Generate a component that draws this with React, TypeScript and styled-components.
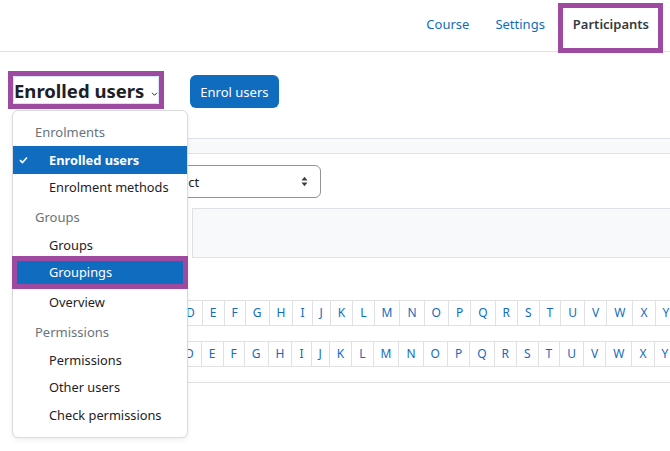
import React from 'react';
import styled, { createGlobalStyle } from 'styled-components';

const GlobalStyle = createGlobalStyle`
  html, body {
    margin: 0;
    padding: 0;
    background: #ffffff;
  }
  body {
    font-family: "Noto Sans", "Open Sans", sans-serif;
    font-size: 13px;
    color: #1d2125;
  }
  * {
    box-sizing: border-box;
  }
`;

const MARK = '#9f4aa1';
const PRIMARY = '#0f6cbf';
const LINE = '#dee2e6';

const Page = styled.div`
  width: 670px;
  height: 451px;
  overflow: hidden;
  position: relative;
  background: #ffffff;
`;

const TopNav = styled.nav`
  height: 52px;
  display: flex;
  justify-content: flex-end;
  align-items: flex-start;
  padding-right: 7px;
  border-bottom: 1px solid ${LINE};
`;

const NavLink = styled.a<{ $marked?: boolean }>`
  display: block;
  font-size: 13px;
  line-height: 20px;
  text-decoration: none;
  white-space: nowrap;
  color: ${p => (p.$marked ? '#343a40' : PRIMARY)};
  font-weight: ${p => (p.$marked ? 600 : 400)};
  padding: ${p => (p.$marked ? '6px 9px 0 10px' : '14px 13px')};
  ${p =>
    p.$marked
      ? `
    position: relative;
    z-index: 1;
    margin-top: 3px;
    height: 50px;
    border: 5px solid ${MARK};
    background: #ffffff;
  `
      : ''}
`;

const Main = styled.main`
  padding-left: 8px;
`;

const HeaderRow = styled.div`
  display: flex;
  align-items: center;
  margin-top: 19px;
  height: 38px;
`;

const SelectWrap = styled.div`
  position: relative;
`;

const MarkedFrame = styled.div`
  border: 5px solid ${MARK};
  height: 38px;
`;

const HeadingSelect = styled.div`
  display: flex;
  align-items: center;
  height: 28px;
  padding: 2px 0 0 0;
  border: 1px solid rgba(15, 108, 191, 0.18);
  border-radius: 2px;
  font-size: 18.5px;
  font-weight: 700;
  line-height: 26px;
  color: #1d2125;
  white-space: nowrap;
`;

const Chevron = styled.svg`
  margin-left: 7px;
  margin-top: 5px;
  flex: none;
`;

const PrimaryButton = styled.button`
  margin-left: 26px;
  margin-top: 3px;
  height: 33px;
  padding: 0 10px;
  border: none;
  border-radius: 6px;
  background: ${PRIMARY};
  color: #ffffff;
  font-family: inherit;
  font-size: 13px;
  white-space: nowrap;
`;

const Menu = styled.div`
  position: absolute;
  top: 39px;
  left: 4px;
  width: 176px;
  padding: 7px 0 8px;
  background: #ffffff;
  border: 1px solid #d7dade;
  border-radius: 6px;
  box-shadow: 0 2px 5px rgba(0, 0, 0, 0.07);
  z-index: 10;
`;

const MenuHeader = styled.div<{ $first?: boolean }>`
  height: 28px;
  margin-top: ${p => (p.$first ? 0 : 2)}px;
  padding-left: 22px;
  display: flex;
  align-items: center;
  color: #6a737b;
  font-size: 13px;
`;

const MenuItem = styled.div<{ $active?: boolean; $marked?: boolean }>`
  display: flex;
  align-items: center;
  height: ${p => (p.$marked ? 33 : 27.5)}px;
  padding-left: ${p => (p.$marked ? 2 : 6)}px;
  font-size: 12.8px;
  white-space: nowrap;
  color: ${p => (p.$active || p.$marked ? '#ffffff' : '#1d2125')};
  font-weight: ${p => (p.$active ? 700 : 400)};
  background: ${p => (p.$active || p.$marked ? PRIMARY : 'transparent')};
  ${p =>
    p.$marked
      ? `
    margin: -3px -1px 0;
    border: 5px solid ${MARK};
  `
      : ''}
`;

const IconSlot = styled.span`
  width: 30px;
  flex: none;
  display: flex;
  align-items: center;
`;

const Content = styled.div`
  margin-top: 29px;
  margin-left: 22px;
`;

const FilterBand = styled.div`
  height: 16px;
  background: #f8f9fa;
  border-top: 1px solid ${LINE};
  border-bottom: 1px solid ${LINE};
`;

const FilterRow = styled.div`
  display: flex;
  align-items: center;
  padding: 11px 0 10px 120px;
`;

const Select = styled.div<{ $width: number }>`
  width: ${p => p.$width}px;
  height: 33px;
  display: flex;
  align-items: center;
  justify-content: space-between;
  padding: 0 12px 0 12px;
  border: 1px solid #8f959e;
  border-radius: 6px;
  font-size: 13px;
  color: #1d2125;
`;

const FilterFooter = styled.div`
  margin-left: 162px;
  height: 50px;
  background: #f8f9fa;
  border: 1px solid ${LINE};
  border-right: none;
`;

const Initials = styled.div`
  margin-top: 42px;
  padding-bottom: 15px;
  border-bottom: 1px solid ${LINE};
`;

const InitialsRow = styled.div<{ $offset: number }>`
  display: flex;
  align-items: center;
  height: 26px;
  padding-left: ${p => p.$offset}px;
  & + & {
    margin-top: 15px;
  }
`;

const LetterCell = styled.a`
  flex: none;
  height: 26px;
  line-height: 24px;
  padding: 0 7px;
  margin-left: -1px;
  border: 1px solid ${LINE};
  color: ${PRIMARY};
  font-size: 12px;
  text-decoration: none;
`;

const letters = 'ABCDEFGHIJKLMNOPQRSTUVWXYZ'.split('');

const menuSections = [
  {
    title: 'Enrolments',
    items: [
      { label: 'Enrolled users', active: true },
      { label: 'Enrolment methods' },
    ],
  },
  {
    title: 'Groups',
    items: [{ label: 'Groups' }, { label: 'Groupings', marked: true }, { label: 'Overview' }],
  },
  {
    title: 'Permissions',
    items: [{ label: 'Permissions' }, { label: 'Other users' }, { label: 'Check permissions' }],
  },
];

const CheckIcon = () => (
  <svg width="9" height="8" viewBox="0 0 9 8">
    <polyline points="1,4.2 3.4,6.5 8,1.5" fill="none" stroke="#ffffff" strokeWidth="1.6" />
  </svg>
);

const SortArrows = () => (
  <svg width="7" height="11" viewBox="0 0 7 11">
    <polygon points="0.5,4.5 3.5,0.8 6.5,4.5" fill="#3a3f44" />
    <polygon points="0.5,6.5 3.5,10.2 6.5,6.5" fill="#3a3f44" />
  </svg>
);

const InitialsBar: React.FC<{ offset: number }> = ({ offset }) => (
  <InitialsRow $offset={offset}>
    {letters.map(letter => (
      <LetterCell key={letter}>{letter}</LetterCell>
    ))}
  </InitialsRow>
);

const App: React.FC = () => {
  return (
    <Page>
      <GlobalStyle />
      <TopNav>
        <NavLink>Course</NavLink>
        <NavLink>Settings</NavLink>
        <NavLink $marked>Participants</NavLink>
      </TopNav>

      <Main>
        <HeaderRow>
          <SelectWrap>
            <MarkedFrame>
              <HeadingSelect>
                Enrolled users
                <Chevron width="7" height="6" viewBox="0 0 7 6">
                  <polyline points="1,1.8 3.5,4.3 6,1.8" fill="none" stroke="#2a2f33" strokeWidth="1" />
                </Chevron>
              </HeadingSelect>
            </MarkedFrame>

            <Menu>
              {menuSections.map((section, i) => (
                <React.Fragment key={section.title}>
                  <MenuHeader $first={i === 0}>{section.title}</MenuHeader>
                  {section.items.map((item: any) => (
                    <MenuItem key={item.label} $active={item.active} $marked={item.marked}>
                      <IconSlot>{item.active && <CheckIcon />}</IconSlot>
                      {item.label}
                    </MenuItem>
                  ))}
                </React.Fragment>
              ))}
            </Menu>
          </SelectWrap>

          <PrimaryButton>Enrol users</PrimaryButton>
        </HeaderRow>

        <Content>
          <FilterBand />
          <FilterRow>
            <Select $width={171}>
              Select
              <SortArrows />
            </Select>
          </FilterRow>
          <FilterFooter />

          <Initials>
            <InitialsBar offset={81} />
            <InitialsBar offset={80} />
          </Initials>
        </Content>
      </Main>
    </Page>
  );
};

export default App;
